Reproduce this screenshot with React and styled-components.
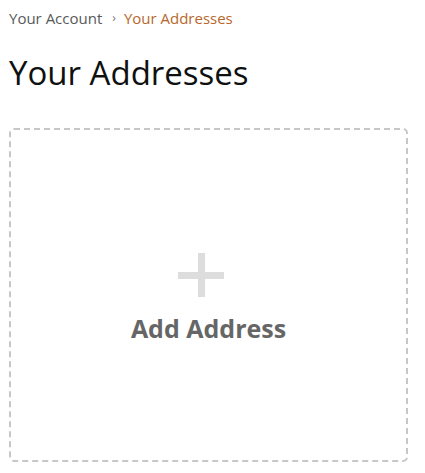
import React from "react";
import styled, { createGlobalStyle } from "styled-components";

const GlobalStyle = createGlobalStyle`
  body {
    margin: 0;
    background: #ffffff;
    font-family: "Open Sans", "Liberation Sans", sans-serif;
  }
`;

const Page = styled.div`
  padding: 8px 17px 0 9px;
`;

const Crumbs = styled.nav`
  display: flex;
  align-items: center;
  gap: 8px;
  font-size: 15px;
  line-height: 20px;
`;

const Crumb = styled.span`
  color: ${(p) => (p.$active ? "#b7672b" : "#565959")};
`;

const Sep = styled.span`
  margin-left: 2px;
  font-size: 12px;
  color: #767676;
`;

const Title = styled.h1`
  margin: 25px 0 35px;
  font-size: 33px;
  font-weight: 400;
  line-height: 40px;
  color: #0f1111;
`;

const AddCard = styled.div`
  box-sizing: border-box;
  height: 334px;
  border: 2px dashed #c7c7c7;
  border-radius: 5px;
  display: flex;
  flex-direction: column;
  align-items: center;
  justify-content: center;
  gap: 14px;
  padding-top: 8px;
`;

const Plus = styled.div`
  position: relative;
  width: 46px;
  height: 44px;
  margin-right: 16px;
  &::before,
  &::after {
    content: "";
    position: absolute;
    background: #dddddd;
  }
  &::before {
    left: 20px;
    top: 0;
    width: 7px;
    height: 44px;
  }
  &::after {
    top: 19px;
    left: 0;
    height: 7px;
    width: 46px;
  }
`;

const AddLabel = styled.div`
  font-size: 25px;
  font-weight: 700;
  line-height: 34px;
  color: #666666;
`;

export default function App() {
  return (
    <>
      <GlobalStyle />
      <Page>
        <Crumbs>
          <Crumb>Your Account</Crumb>
          <Sep>›</Sep>
          <Crumb $active>Your Addresses</Crumb>
        </Crumbs>
        <Title>Your Addresses</Title>
        <AddCard>
          <Plus />
          <AddLabel>Add Address</AddLabel>
        </AddCard>
      </Page>
    </>
  );
}
